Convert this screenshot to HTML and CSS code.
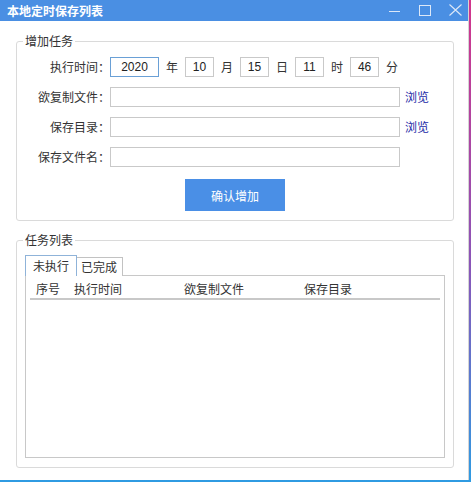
FILE: index.html
```html
<!DOCTYPE html>
<html lang="zh-CN">
<head>
<meta charset="utf-8">
<title>本地定时保存列表</title>
<link rel="stylesheet" href="styles.css">
</head>
<body>
<div class="window">
  <div class="titlebar">
    <span class="title">本地定时保存列表</span>
    <div class="controls">
      <svg class="ic-min" width="11" height="12" viewBox="0 0 11 12"><line x1="0" y1="7.5" x2="11" y2="7.5" stroke="#dce8f8" stroke-width="1"/></svg>
      <svg class="ic-max" width="12" height="12" viewBox="0 0 12 12"><rect x="0.5" y="1.5" width="11" height="10" fill="none" stroke="#dce8f8" stroke-width="1"/></svg>
      <svg class="ic-close" width="13" height="12" viewBox="0 0 13 12"><path d="M0.5 0.5 L12.5 11.5 M12.5 0.5 L0.5 11.5" stroke="#dce8f8" stroke-width="1.1" fill="none"/></svg>
    </div>
  </div>
  <div class="content">
    <fieldset class="group">
      <legend>增加任务</legend>
      <div class="form">
        <div class="row">
          <span class="label">执行时间：</span>
          <input class="field year" value="2020">
          <span class="unit">年</span>
          <input class="field num" value="10">
          <span class="unit">月</span>
          <input class="field num" value="15">
          <span class="unit">日</span>
          <input class="field num" value="11">
          <span class="unit">时</span>
          <input class="field num" value="46">
          <span class="unit">分</span>
        </div>
        <div class="row">
          <span class="label">欲复制文件：</span>
          <input class="field long">
          <span class="browse">浏览</span>
        </div>
        <div class="row">
          <span class="label">保存目录：</span>
          <input class="field long">
          <span class="browse">浏览</span>
        </div>
        <div class="row">
          <span class="label">保存文件名：</span>
          <input class="field long">
        </div>
        <div class="btn-row">
          <button class="btn">确认增加</button>
        </div>
      </div>
    </fieldset>
    <fieldset class="group group-list">
      <legend>任务列表</legend>
      <div class="tabs-wrap">
        <div class="tabs">
          <span class="tab active">未执行</span>
          <span class="tab">已完成</span>
        </div>
        <div class="panel">
          <div class="thead">
            <span class="th c1">序号</span>
            <span class="th c2">执行时间</span>
            <span class="th c3">欲复制文件</span>
            <span class="th c4">保存目录</span>
          </div>
        </div>
      </div>
    </fieldset>
  </div>
</div>
</body>
</html>
```

FILE: styles.css
```css
html, body {
  margin: 0;
  padding: 0;
}
body {
  width: 471px;
  height: 482px;
  overflow: hidden;
  background: linear-gradient(to bottom, #d2358c 0%, #8a55b8 55%, #2f9be2 100%);
  font-family: "Noto Sans CJK SC", "Liberation Sans", sans-serif;
  font-size: 12px;
  color: #333;
}
.window {
  width: 469px;
  height: 480px;
  box-sizing: border-box;
  background: #fff;
  border-right: 1px solid #d4d4d4;
  display: flex;
  flex-direction: column;
}
.titlebar {
  height: 21px;
  flex: none;
  background: #4a8fe3;
  display: flex;
  align-items: center;
  padding-left: 7px;
}
.title {
  color: #fff;
  font-weight: bold;
  font-size: 12px;
  line-height: 21px;
}
.controls {
  margin-left: auto;
  display: flex;
  align-items: center;
  margin-right: 6px;
  margin-top: -2px;
}
.ic-min { margin-right: 19px; }
.ic-max { margin-right: 18px; }
.content {
  flex: 1;
  display: flex;
  flex-direction: column;
  padding: 12px 14px 12px 16px;
}
.group {
  margin: 0;
  padding: 0;
  min-width: 0;
  border: 1px solid #dadada;
  border-radius: 3px;
}
.group legend {
  margin-left: 6px;
  padding: 0 2px;
  line-height: 16px;
  font-size: 12px;
  color: #333;
}
.form {
  padding: 8px 0 9px;
  display: flex;
  flex-direction: column;
  gap: 10px;
}
.row {
  display: flex;
  align-items: center;
  height: 20px;
}
.label {
  width: 93px;
  flex: none;
  text-align: right;
  line-height: 20px;
  color: #333;
}
.field {
  box-sizing: border-box;
  height: 20px;
  margin: 0;
  padding: 0;
  border: 1px solid #c9c9c9;
  font-family: "Liberation Sans", sans-serif;
  font-size: 12px;
  color: #222;
  text-align: center;
  background: #fff;
  outline: none;
}
.year {
  width: 49px;
  border-color: #6aa0d6;
}
.num {
  width: 29px;
}
.unit {
  margin: 0 7px;
  line-height: 20px;
}
.long {
  width: 290px;
}
.browse {
  margin-left: 5px;
  color: #1b2aa6;
  line-height: 20px;
}
.btn-row {
  display: flex;
  justify-content: center;
  margin-top: 2px;
}
.btn {
  width: 100px;
  height: 32px;
  border: none;
  background: #4a8fe6;
  color: #fff;
  font-family: "Noto Sans CJK SC", sans-serif;
  font-size: 12px;
  padding: 0;
}
.group-list {
  margin-top: 11px;
  flex: 1;
  display: flex;
  flex-direction: column;
}
.tabs-wrap {
  flex: 1;
  display: flex;
  flex-direction: column;
  padding: 8px 8px 9px;
}
.tabs {
  display: flex;
  align-items: flex-end;
  height: 20px;
  margin-bottom: -1px;
  position: relative;
  z-index: 1;
}
.tab {
  box-sizing: border-box;
  height: 19px;
  line-height: 17px;
  border: 1px solid #c2c2c2;
  border-left: none;
  border-bottom: none;
  padding: 0 5px 0 4px;
  color: #333;
  background: #fff;
}
.tab.active {
  height: 21px;
  line-height: 19px;
  border: 1px solid #8fb3d9;
  border-bottom: none;
  padding: 0 7px;
}
.panel {
  flex: 1;
  border: 1px solid #c8c8c8;
  padding: 4px 4px 0;
}
.thead {
  display: flex;
  height: 18px;
  line-height: 18px;
  border-bottom: 2px solid #c8c8c8;
}
.th {
  padding-left: 6px;
  box-sizing: border-box;
  color: #333;
  white-space: nowrap;
}
.c1 { width: 38px; }
.c2 { width: 110px; }
.c3 { width: 120px; }
.c4 { flex: 1; }
```
